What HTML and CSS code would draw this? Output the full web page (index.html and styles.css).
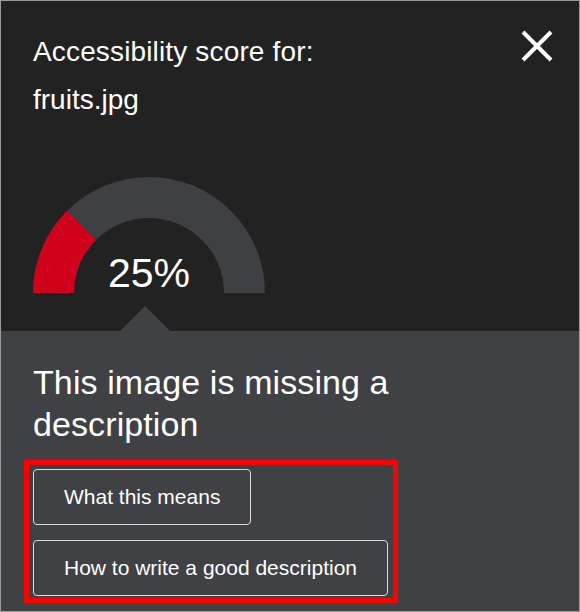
FILE: index.html
```html
<!DOCTYPE html>
<html lang="en">
<head>
    <meta charset="UTF-8">
    <meta name="viewport" content="width=device-width, initial-scale=1.0">
    <title>Accessibility score</title>
    <link rel="stylesheet" href="styles.css">
</head>
<body>
    <div class="dialog">
        <div class="summary">
            <div class="summary-head">
                <p class="title">Accessibility score for:</p>
                <button class="close" aria-label="Close">
                    <svg width="32" height="32" viewBox="0 0 32 32">
                        <path d="M2 2 L30 30 M30 2 L2 30" stroke="#fff" stroke-width="4" fill="none"/>
                    </svg>
                </button>
            </div>
            <p class="file">fruits.jpg</p>
            <!-- score gauge, 25% -->
            <div class="gauge">
                <svg width="232" height="116" viewBox="0 0 232 116">
                    <path d="M0 116 A116 116 0 0 1 232 116 L191 116 A75 75 0 0 0 41 116 Z" fill="#3f4044"/>
                    <path d="M0 116 A116 116 0 0 1 33.98 33.98 L62.97 62.97 A75 75 0 0 0 41 116 Z" fill="#d0021b"/>
                </svg>
                <span class="score">25%</span>
            </div>
        </div>
        <div class="details">
            <h2>This image is missing a description</h2>
            <div class="actions">
                <button class="action-btn">What this means</button>
                <button class="action-btn">How to write a good description</button>
            </div>
        </div>
    </div>
</body>
</html>
```
FILE: styles.css
```css
body {
    margin: 0;
    padding: 0;
    font-family: "Liberation Sans", Arial, sans-serif;
    background-color: #fff;
}

.dialog {
    width: 580px;
    height: 612px;
    box-sizing: border-box;
    border: 1px solid #9b9b9b;
    background-color: #222222;
    color: #fff;
    display: flex;
    flex-direction: column;
}

.summary {
    position: relative;
    height: 330px;
    flex-shrink: 0;
    padding: 0 26px 0 32px;
}
.summary::after {
    content: "";
    position: absolute;
    left: 119px;
    bottom: 0;
    border-left: 25px solid transparent;
    border-right: 25px solid transparent;
    border-bottom: 25px solid #404145;
}

.summary-head {
    display: flex;
    justify-content: space-between;
    align-items: flex-start;
    padding-top: 29px;
}
.title {
    margin: 6px 0 0;
    font-size: 28px;
    line-height: 32px;
    letter-spacing: 0.15px;
}
.close {
    background: none;
    border: none;
    padding: 0;
    width: 32px;
    height: 32px;
    cursor: pointer;
}
.close svg {
    display: block;
}
.file {
    margin: 16px 0 0;
    font-size: 28px;
    line-height: 32px;
}

.gauge {
    position: relative;
    width: 232px;
    height: 116px;
    margin-top: 61px;
}
.gauge svg {
    display: block;
}
.score {
    position: absolute;
    left: 0;
    right: 0;
    top: 72px;
    text-align: center;
    font-size: 41px;
    line-height: 48px;
}

/* bottom panel */
.details {
    flex: 1;
    background-color: #404145;
    padding: 30px 32px 0;
}
.details h2 {
    margin: 0;
    font-size: 34px;
    line-height: 42px;
    font-weight: normal;
    letter-spacing: 0.1px;
}
.actions {
    display: flex;
    flex-direction: column;
    align-items: flex-start;
    gap: 15px;
    width: fit-content;
    margin: 15px 0 0 -9px;
    padding: 4px 5px 2px 4px;
    border: 5px solid #ff0000;
}
.action-btn {
    background-color: transparent;
    color: #fff;
    border: 1px solid #dcdcdc;
    border-radius: 4px;
    padding: 15px 30px 16px;
    font-family: "Liberation Sans", Arial, sans-serif;
    font-size: 21px;
    line-height: 23px;
    cursor: pointer;
}
```
